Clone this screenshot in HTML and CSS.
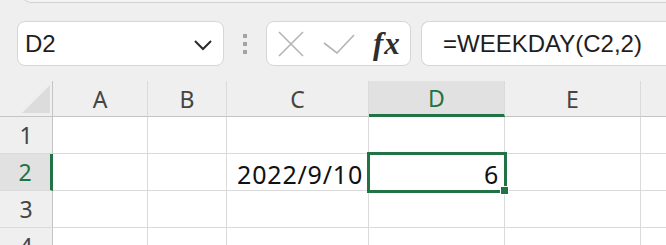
FILE: index.html
```html
<!DOCTYPE html>
<html lang="en">
<head>
  <meta charset="UTF-8">
  <title>WEEKDAY</title>
  <link rel="stylesheet" href="styles.css">
</head>
<body>
  <div class="toolbar">
    <div class="ribbon-edge"></div>
    <div class="formula-row">
      <div class="name-box">
        <span>D2</span>
        <svg class="chevron" width="20" height="12" viewBox="0 0 20 12">
          <path d="M2 2 L10 10 L18 2" fill="none" stroke="#2b2b2b" stroke-width="2"/>
        </svg>
      </div>
      <div class="grip">
        <i></i><i></i><i></i>
      </div>
      <div class="fx-box">
        <svg width="26" height="26" viewBox="0 0 26 26">
          <path d="M1 1 L25 25 M25 1 L1 25" stroke="#b4b4b4" stroke-width="1.6"/>
        </svg>
        <svg width="32" height="20" viewBox="0 0 32 20">
          <path d="M1 9 L14 19 L31 1" fill="none" stroke="#b4b4b4" stroke-width="1.6"/>
        </svg>
        <span class="fx">fx</span>
      </div>
      <div class="formula">=WEEKDAY(C2,2)</div>
    </div>
  </div>

  <div class="sheet">
    <div class="hd corner"><div class="tri"></div></div>
    <div class="hd col">A</div>
    <div class="hd col">B</div>
    <div class="hd col">C</div>
    <div class="hd col active-col">D</div>
    <div class="hd col">E</div>
    <div class="hd col last"></div>

    <div class="hd row">1</div>
    <div class="cell"></div><div class="cell"></div><div class="cell"></div><div class="cell"></div><div class="cell"></div><div class="cell last"></div>

    <div class="hd row active-row">2</div>
    <div class="cell"></div><div class="cell"></div><div class="cell num">2022/9/10</div><div class="cell num">6</div><div class="cell"></div><div class="cell last"></div>

    <div class="hd row">3</div>
    <div class="cell"></div><div class="cell"></div><div class="cell"></div><div class="cell"></div><div class="cell"></div><div class="cell last"></div>

    <div class="hd row">4</div>
    <div class="cell"></div><div class="cell"></div><div class="cell"></div><div class="cell"></div><div class="cell"></div><div class="cell last"></div>

    <div class="selection"></div>
    <div class="handle"></div>
  </div>
</body>
</html>
```

FILE: styles.css
```css
body {
  margin: 0;
  background: #efefef;
  font-family: "Liberation Sans", Arial, sans-serif;
  overflow: hidden;
}
.toolbar {
  display: flow-root;
  height: 81px;
}
.ribbon-edge {
  margin-left: 22px;
  margin-top: -20px;
  height: 21px;
  border: 1px solid #d2d2d2;
  border-right: none;
  border-radius: 0 0 0 9px;
  background: #f3f3f3;
}
.formula-row {
  display: flex;
  align-items: center;
  margin-top: 18px;
  padding-left: 17px;
  height: 45px;
}
.name-box {
  box-sizing: border-box;
  width: 207px;
  height: 45px;
  background: #fff;
  border: 1px solid #d6d6d6;
  border-radius: 8px;
  display: flex;
  align-items: center;
  justify-content: space-between;
  padding: 0 10px 0 7px;
  font-size: 24px;
  color: #1e1e1e;
}
.chevron {
  margin-top: 2px;
}
.grip {
  width: 42px;
  display: flex;
  flex-direction: column;
  align-items: center;
  gap: 4px;
}
.grip i {
  display: block;
  width: 4px;
  height: 4px;
  background: #a3a3a3;
}
.fx-box {
  box-sizing: border-box;
  width: 145px;
  height: 45px;
  background: #fff;
  border: 1px solid #d6d6d6;
  border-radius: 8px;
  display: flex;
  align-items: center;
  padding-left: 11px;
  gap: 19px;
}
.fx {
  font-family: "Liberation Serif", "Times New Roman", serif;
  font-style: italic;
  font-weight: bold;
  font-size: 31px;
  color: #2e2e2e;
  margin-left: -1px;
  letter-spacing: 1px;
}
.formula {
  flex: 1;
  box-sizing: border-box;
  margin-left: 10px;
  height: 45px;
  background: #fff;
  border: 1px solid #d6d6d6;
  border-right: none;
  border-radius: 8px 0 0 8px;
  padding-left: 21px;
  font-size: 24px;
  line-height: 43px;
  color: #1e1e1e;
}

.sheet {
  position: relative;
  display: grid;
  grid-template-columns: 53px 95px 79px 142px 136px 136px 1fr;
  grid-template-rows: 36px 37px 37px 37px 37px;
  background: #fff;
  font-family: "Noto Sans", "Liberation Sans", sans-serif;
}
.hd {
  box-sizing: border-box;
  background: #efefef;
  color: #444;
  display: flex;
  align-items: center;
  justify-content: center;
  font-size: 23px;
}
.col {
  border-right: 1px solid #dadada;
  border-bottom: 1px solid #c4c4c4;
}
.col.last {
  border-right: none;
}
.row {
  border-right: 1px solid #c4c4c4;
  border-bottom: 1px solid #dadada;
}
.corner {
  border-right: 1px solid #c4c4c4;
  border-bottom: 1px solid #c4c4c4;
  align-items: flex-end;
  justify-content: flex-end;
  padding: 0 2px 3px 0;
}
.tri {
  width: 28px;
  height: 28px;
  background: #dcdcdc;
  clip-path: polygon(100% 0, 100% 100%, 0 100%);
}
.active-col {
  background: #e1e1e1;
  color: #217346;
  border-bottom: 3px solid #217346;
}
.active-row {
  background: #e1e1e1;
  color: #217346;
  border-right: 3px solid #217346;
}
.cell {
  box-sizing: border-box;
  border-right: 1px solid #dadada;
  border-bottom: 1px solid #dadada;
}
.cell.last {
  border-right: none;
}
.num {
  display: flex;
  align-items: center;
  justify-content: flex-end;
  padding: 3px 5px 0 0;
  font-size: 25px;
  letter-spacing: 0.8px;
  color: #111;
}
.selection {
  position: absolute;
  left: 367px;
  top: 71px;
  width: 140px;
  height: 41px;
  box-sizing: border-box;
  border: 3px solid #217346;
}
.handle {
  position: absolute;
  left: 500px;
  top: 105px;
  width: 9px;
  height: 9px;
  box-sizing: border-box;
  background: #217346;
  border: 1px solid #fff;
}
```
